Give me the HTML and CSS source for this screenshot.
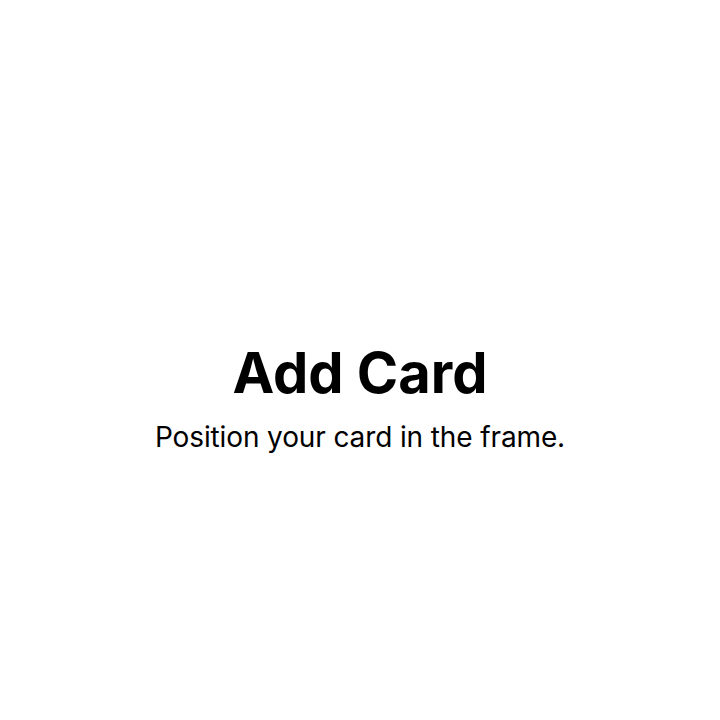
FILE: index.html
```html
<!DOCTYPE html>
<html lang="en">
<head>
<meta charset="utf-8">
<title>Add Card</title>
<link rel="stylesheet" href="styles.css">
</head>
<body>
<main class="screen">
  <div class="intro">
    <h1 class="title">Add Card</h1>
    <p class="subtitle">Position your card in the frame.</p>
  </div>
</main>
</body>
</html>
```
FILE: styles.css
```css
html, body {
  margin: 0;
  padding: 0;
  background: #ffffff;
}
.screen {
  width: 720px;
  height: 720px;
  display: flex;
  flex-direction: column;
  align-items: center;
  justify-content: flex-start;
  padding-top: 339px;
  box-sizing: border-box;
  font-family: Inter, "Noto Sans", sans-serif;
  color: #000000;
}
.intro {
  display: flex;
  flex-direction: column;
  align-items: center;
  gap: 13px;
}
.title {
  margin: 0;
  font-size: 56px;
  font-weight: 700;
  line-height: 68px;
  letter-spacing: 0;
}
.subtitle {
  margin: 0;
  font-size: 28px;
  font-weight: 400;
  line-height: 34px;
  letter-spacing: -0.12px;
}
```
